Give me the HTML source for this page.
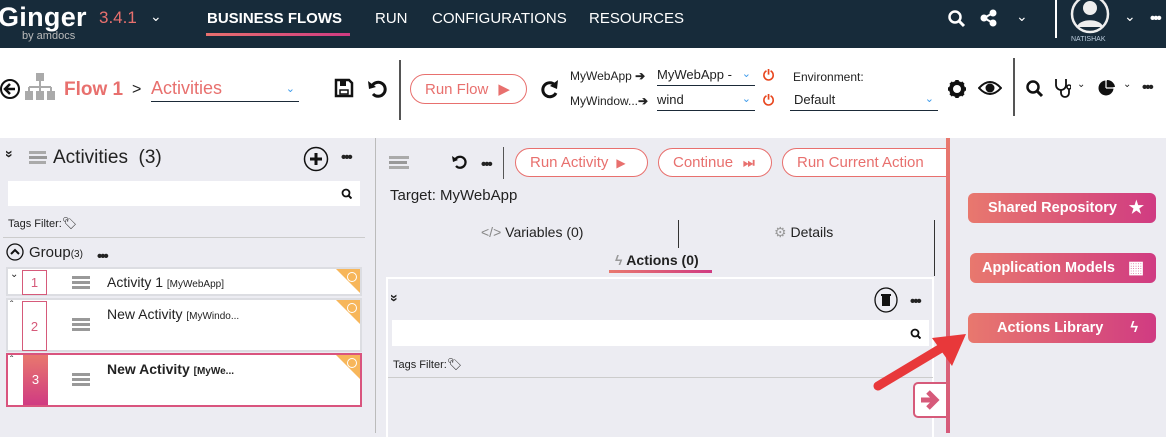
<!DOCTYPE html>
<html><head><meta charset="utf-8"><style>
*{box-sizing:border-box;margin:0;padding:0}
body{width:1166px;height:433px;overflow:hidden;position:relative;font-family:"Liberation Sans",sans-serif;background:#ececf2;color:#222}
.a{position:absolute}
.hdr{left:0;top:0;width:1166px;height:48px;background:#172b3a;color:#fff}
.tb{left:0;top:48px;width:1166px;height:90px;background:#fff}
.pill{position:absolute;border:1.5px solid #e8706e;border-radius:16px;color:#e8706e;font-size:15px;height:29px;display:flex;align-items:center;padding:0 14px;background:#fff;white-space:nowrap;overflow:hidden}
.dd{position:absolute;border-bottom:1.5px solid #1b2a38;font-size:13px;color:#222}
.chev{color:#3d9bea;font-size:11px;position:absolute;right:4px}
.pw{color:#e8461e;font-weight:bold;font-size:14px}
.gbtn{position:absolute;left:968px;width:188px;height:30px;border-radius:6px;background:linear-gradient(90deg,#e8786e,#d03b82);color:#fff;font-size:14.5px;font-weight:bold;line-height:30px;padding-left:20px}
.row{position:absolute;left:6px;width:356px;background:#fff;border:2px solid #dcdde2}
.num{position:absolute;left:14px;top:0;width:25px;border:1px solid #d65a7a;color:#d65a7a;font-size:13px;text-align:center;background:#fff}
.ham{position:absolute;width:18px;height:13px;border-top:3px solid #999;border-bottom:3px solid #999}
.ham:after{content:"";position:absolute;left:0;top:2px;width:18px;height:3px;background:#999}
.tri{position:absolute;right:0;top:0;width:0;height:0;border-top:24px solid #f7b65a;border-left:24px solid transparent}
.tri:after{content:"";position:absolute;right:3px;top:-21px;width:8px;height:8px;border:1.5px solid #fff;border-radius:50%}
.dots{position:absolute;font-size:15px;font-weight:bold;letter-spacing:-2px;line-height:10px}
</style></head><body>
<div class="a hdr">
 <div class="a" style="left:-2px;top:2px;font-size:27px;font-weight:bold;letter-spacing:0.3px">Ginger</div>
 <div class="a" style="left:22px;top:30px;font-size:11px;color:#bbb">by amdocs</div>
 <div class="a" style="left:99px;top:8px;font-size:17px;color:#e8706e">3.4.1</div>
 <div class="a" style="left:150px;top:8px;font-size:14px">&#8964;</div>
 <div class="a" style="left:207px;top:10px;font-size:15px;font-weight:bold">BUSINESS FLOWS</div>
 <div class="a" style="left:206px;top:33px;width:144px;height:3px;background:linear-gradient(90deg,#e8706e,#d03b82)"></div>
 <div class="a" style="left:375px;top:10px;font-size:15px">RUN</div>
 <div class="a" style="left:432px;top:10px;font-size:15px">CONFIGURATIONS</div>
 <div class="a" style="left:589px;top:10px;font-size:15px">RESOURCES</div>
 <svg class="a" style="left:947px;top:9px" width="20" height="20"><circle cx="8" cy="8" r="5.5" fill="none" stroke="#fff" stroke-width="2.5"/><path d="M12 12l5 5" stroke="#fff" stroke-width="3"/></svg>
 <svg class="a" style="left:980px;top:9px" width="18" height="18"><circle cx="4" cy="9" r="3.5" fill="#fff"/><circle cx="13" cy="4" r="3.5" fill="#fff"/><circle cx="13" cy="14" r="3.5" fill="#fff"/><path d="M4 9L13 4M4 9l9 5" stroke="#fff" stroke-width="2"/></svg>
 <div class="a" style="left:1016px;top:8px;font-size:14px">&#8964;</div>
 <div class="a" style="left:1055px;top:0;width:2px;height:38px;background:#fff"></div>
 <svg class="a" style="left:1070px;top:-4px" width="40" height="38"><circle cx="20" cy="18" r="18" fill="none" stroke="#eee" stroke-width="2.5"/><circle cx="20" cy="12" r="7" fill="#eee"/><path d="M7 31c2-9 24-9 26 0z" fill="#eee"/></svg>
 <div class="a" style="left:1071px;top:36px;font-size:7px;color:#bcd">NATISHAK</div>
 <div class="a" style="left:1124px;top:8px;font-size:14px">&#8964;</div>
 <div class="dots" style="left:1150px;top:14px">•••</div>
</div>
<div class="a tb">
 <svg class="a" style="left:0;top:31px" width="22" height="22"><circle cx="10" cy="10" r="9" fill="none" stroke="#111" stroke-width="2"/><path d="M15 10H6M10 5L5 10l5 5" fill="none" stroke="#111" stroke-width="2.5"/></svg>
 <svg class="a" style="left:25px;top:25px" width="30" height="30"><rect x="11" y="0" width="8" height="8" fill="#aaa"/><path d="M15 8v6M4 14h22M4 14v4M15 14v4M26 14v4" stroke="#aaa" stroke-width="2"/><rect x="0" y="18" width="8" height="9" fill="#aaa"/><rect x="11" y="18" width="8" height="9" fill="#aaa"/><rect x="22" y="18" width="8" height="9" fill="#aaa"/></svg>
 <div class="a" style="left:64px;top:31px;font-size:19px;font-weight:bold;color:#e8706e">Flow 1</div>
 <div class="a" style="left:132px;top:33px;font-size:16px">&gt;</div>
 <div class="dd" style="left:151px;top:30px;width:148px;height:24px;font-size:18px;color:#e8706e">Activities<span class="chev" style="top:4px">&#8964;</span></div>
 <svg class="a" style="left:334px;top:30px" width="20" height="20"><path d="M2 2h13l3 3v13H2z" fill="none" stroke="#111" stroke-width="2.5"/><rect x="6" y="3" width="6" height="5" fill="#111"/><rect x="6" y="12" width="8" height="4" fill="none" stroke="#111" stroke-width="1.5"/></svg>
 <svg class="a" style="left:367px;top:30px" width="22" height="22"><path d="M5 8a7 7 0 1 1 1 8" fill="none" stroke="#111" stroke-width="3"/><path d="M1 3l1 8 7-2z" fill="#111"/></svg>
 <div class="a" style="left:399px;top:12px;width:2px;height:60px;background:#555"></div>
 <div class="pill" style="left:410px;top:26px;width:117px;height:30px">Run Flow <span style="margin-left:10px">&#9654;</span></div>
 <svg class="a" style="left:540px;top:31px" width="20" height="20"><path d="M15 6a7 7 0 1 0 1 8" fill="none" stroke="#111" stroke-width="3"/><path d="M18 1l-1 9-7-3z" fill="#111"/></svg>
 <div class="a" style="left:570px;top:21px;font-size:12px">MyWebApp <b>➔</b></div>
 <div class="a" style="left:570px;top:46px;font-size:12px">MyWindow...<b>➔</b></div>
 <div class="dd" style="left:657px;top:19px;width:98px;height:19px;">MyWebApp -<span class="chev">&#8964;</span></div>
 <div class="dd" style="left:657px;top:44px;width:98px;height:19px;">wind<span class="chev">&#8964;</span></div>
 <div class="a pw" style="left:763px;top:19px">⏻</div>
 <div class="a pw" style="left:763px;top:44px">⏻</div>
 <div class="a" style="left:793px;top:22px;font-size:12px">Environment:</div>
 <div class="dd" style="left:790px;top:44px;width:148px;height:19px;padding-left:4px">Default<span class="chev">&#8964;</span></div>
 <svg class="a" style="left:947px;top:31px" width="20" height="20"><circle cx="10" cy="10" r="6" fill="none" stroke="#111" stroke-width="4"/><path d="M10 1v4M10 15v4M1 10h4M15 10h4M3.6 3.6l3 3M13.4 13.4l3 3M3.6 16.4l3-3M13.4 6.6l3-3" stroke="#111" stroke-width="3.5"/></svg>
 <svg class="a" style="left:978px;top:32px" width="24" height="16"><path d="M1 8q11-12 22 0q-11 12-22 0z" fill="none" stroke="#111" stroke-width="2"/><circle cx="12" cy="8" r="4.5" fill="#111"/></svg>
 <div class="a" style="left:1013px;top:10px;width:2px;height:58px;background:#555"></div>
 <svg class="a" style="left:1025px;top:31px" width="20" height="20"><circle cx="8" cy="8" r="5.5" fill="none" stroke="#111" stroke-width="2.5"/><path d="M12 12l5 5" stroke="#111" stroke-width="3"/></svg>
 <svg class="a" style="left:1053px;top:30px" width="18" height="20"><path d="M3 1v6a5 5 0 0 0 10 0V1" fill="none" stroke="#111" stroke-width="1.8"/><path d="M8 12v3a4 4 0 0 0 8 0v-4" fill="none" stroke="#111" stroke-width="1.8"/><circle cx="16" cy="9" r="2" fill="none" stroke="#111" stroke-width="1.5"/></svg>
 <div class="a" style="left:1077px;top:31px;font-size:10px">&#8964;</div>
 <svg class="a" style="left:1098px;top:31px" width="18" height="18"><circle cx="8" cy="9" r="7.5" fill="#111"/><path d="M9 1a8 8 0 0 1 8 7H9z" fill="#111"/><path d="M8 9V1M8 9h9" stroke="#fff" stroke-width="1.2"/></svg>
 <div class="a" style="left:1123px;top:31px;font-size:10px">&#8964;</div>
 <div class="dots" style="left:1142px;top:35px">•••</div>
</div>
<!-- left panel -->
<div class="a" style="left:375px;top:138px;width:1px;height:295px;background:#bbb"></div>
<div class="a" style="left:6px;top:146px;font-size:14px;font-weight:bold;transform:rotate(90deg)">»</div>
<div class="ham" style="left:29px;top:151px;width:17px;border-color:#aaa"></div>
<div class="a" style="left:53px;top:147px;font-size:19px">Activities &nbsp;(3)</div>
<svg class="a" style="left:303px;top:146px" width="26" height="26"><circle cx="13" cy="13" r="11.5" fill="none" stroke="#111" stroke-width="1.5"/><path d="M13 7v12M7 13h12" stroke="#111" stroke-width="3"/></svg>
<div class="dots" style="left:341px;top:153px">•••</div>
<div class="a" style="left:8px;top:181px;width:352px;height:25px;background:#fff"><svg class="a" style="right:8px;top:7px" width="11" height="11"><circle cx="5" cy="5" r="3.5" fill="none" stroke="#111" stroke-width="1.8"/><path d="M7.5 7.5l3 3" stroke="#111" stroke-width="2"/></svg></div>
<div class="a" style="left:8px;top:216px;font-size:11px">Tags Filter:<span style="font-size:12px">🏷</span></div>
<div class="a" style="left:3px;top:237px;width:362px;height:1px;background:#ccc"></div>
<svg class="a" style="left:6px;top:243px" width="18" height="18"><circle cx="9" cy="9" r="8" fill="none" stroke="#111" stroke-width="1.3"/><path d="M5 11l4-4 4 4" fill="none" stroke="#111" stroke-width="2"/></svg>
<div class="a" style="left:29px;top:244px;font-size:15px">Group<span style="font-size:10px">(3)</span></div>
<div class="dots" style="left:97px;top:252px">•••</div>
<div class="row" style="top:267px;height:29px"><div class="a" style="left:2px;top:0;font-size:10px">&#8964;</div><div class="num" style="top:1px;height:25px;line-height:23px">1</div><div class="ham" style="left:64px;top:7px"></div><div class="a" style="left:99px;top:5px;font-size:14px">Activity 1 <span style="font-size:10px">[MyWebApp]</span></div><div class="tri"></div></div>
<div class="row" style="top:298px;height:54px"><div class="a" style="left:2px;top:0;font-size:10px">ˆ</div><div class="num" style="top:1px;height:50px;line-height:50px">2</div><div class="ham" style="left:64px;top:18px"></div><div class="a" style="left:99px;top:6px;font-size:14px">New Activity <span style="font-size:10px">[MyWindo...</span></div><div class="tri"></div></div>
<div class="row" style="top:353px;height:54px;border-color:#d9547e"><div class="a" style="left:2px;top:0;font-size:10px">ˆ</div><div class="num" style="top:0;height:50px;line-height:50px;background:linear-gradient(#e8786e,#d03b82);color:#fff;border:none;width:25px;left:15px">3</div><div class="ham" style="left:64px;top:18px"></div><div class="a" style="left:99px;top:6px;font-size:14px;font-weight:bold">New Activity <span style="font-size:10px">[MyWe...</span></div><div class="tri"></div></div>
<!-- middle -->
<div class="ham" style="left:389px;top:156px;border-color:#aaa;width:20px"></div>
<svg class="a" style="left:451px;top:154px" width="16" height="16"><path d="M4 6a5.5 5.5 0 1 1 1 6" fill="none" stroke="#111" stroke-width="2.3"/><path d="M1 2l1 6 5-2z" fill="#111"/></svg>
<div class="dots" style="left:481px;top:160px">•••</div>
<div class="a" style="left:503px;top:147px;width:1px;height:32px;background:#555"></div>
<div class="pill" style="left:515px;top:148px;width:133px">Run Activity <span style="font-size:12px;margin-left:8px">&#9654;</span></div>
<div class="pill" style="left:658px;top:148px;width:114px">Continue <span style="font-size:13px;margin-left:10px;font-weight:bold">⏭</span></div>
<div class="pill" style="left:782px;top:148px;width:180px">Run Current Action</div>
<div class="a" style="left:390px;top:187px;font-size:15px">Target: MyWebApp</div>
<div class="a" style="left:481px;top:224px;font-size:14px"><span style="color:#888">&lt;/&gt;</span> Variables (0)</div>
<div class="a" style="left:678px;top:220px;width:1px;height:28px;background:#333"></div>
<div class="a" style="left:934px;top:220px;width:1px;height:56px;background:#333"></div>
<div class="a" style="left:774px;top:224px;font-size:14px"><span style="color:#999">⚙</span> Details</div>
<div class="a" style="left:615px;top:252px;font-size:14px;font-weight:bold"><span style="color:#999">ϟ</span> Actions (0)</div>
<div class="a" style="left:609px;top:270px;width:103px;height:3px;background:linear-gradient(90deg,#e8786e,#d03b82)"></div>
<div class="a" style="left:386px;top:277px;width:548px;height:160px;background:#ececf2;border:2px solid #fff;border-bottom:none"></div>
<div class="a" style="left:391px;top:290px;font-size:14px;font-weight:bold;transform:rotate(90deg)">»</div>
<svg class="a" style="left:873px;top:286px" width="26" height="28"><ellipse cx="13" cy="14" rx="11" ry="12" fill="none" stroke="#111" stroke-width="1.3"/><rect x="9" y="10" width="8" height="10" fill="#111"/><rect x="8" y="8" width="10" height="2" fill="#111"/></svg>
<div class="dots" style="left:910px;top:297px">•••</div>
<div class="a" style="left:392px;top:320px;width:537px;height:26px;background:#fff"><svg class="a" style="right:8px;top:8px" width="11" height="11"><circle cx="5" cy="5" r="3.5" fill="none" stroke="#111" stroke-width="1.8"/><path d="M7.5 7.5l3 3" stroke="#111" stroke-width="2"/></svg></div>
<div class="a" style="left:393px;top:357px;font-size:11px">Tags Filter:<span style="font-size:12px">🏷</span></div>
<div class="a" style="left:388px;top:377px;width:545px;height:1px;background:#ccc"></div>
<div class="a" style="left:913px;top:382px;width:36px;height:36px;background:#fff;border:2px solid #d65a7a;border-radius:5px 0 0 5px"><svg width="32" height="32"><path d="M6 16h14M13 8l8 8-8 8" fill="none" stroke="#d65a7a" stroke-width="5"/></svg></div>
<div class="a" style="left:946px;top:138px;width:220px;height:295px;background:#ececf2"></div>
<div class="a" style="left:946px;top:138px;width:4px;height:295px;background:linear-gradient(#e8786e,#d65a7a)"></div>
<div class="gbtn" style="top:193px">Shared Repository <span style="position:absolute;right:12px;font-size:17px">★</span></div>
<div class="gbtn" style="top:253px;left:970px;width:186px;padding-left:12px">Application Models <span style="position:absolute;right:12px;font-size:17px">▦</span></div>
<div class="gbtn" style="top:313px;padding-left:29px">Actions Library <span style="position:absolute;right:18px">ϟ</span></div>
<svg class="a" style="left:870px;top:330px" width="100" height="65"><path d="M8 56L78 14" stroke="#e8383a" stroke-width="9" stroke-linecap="round"/><path d="M96 4L62 8l20 28z" fill="#e8383a"/></svg>
</body></html>
